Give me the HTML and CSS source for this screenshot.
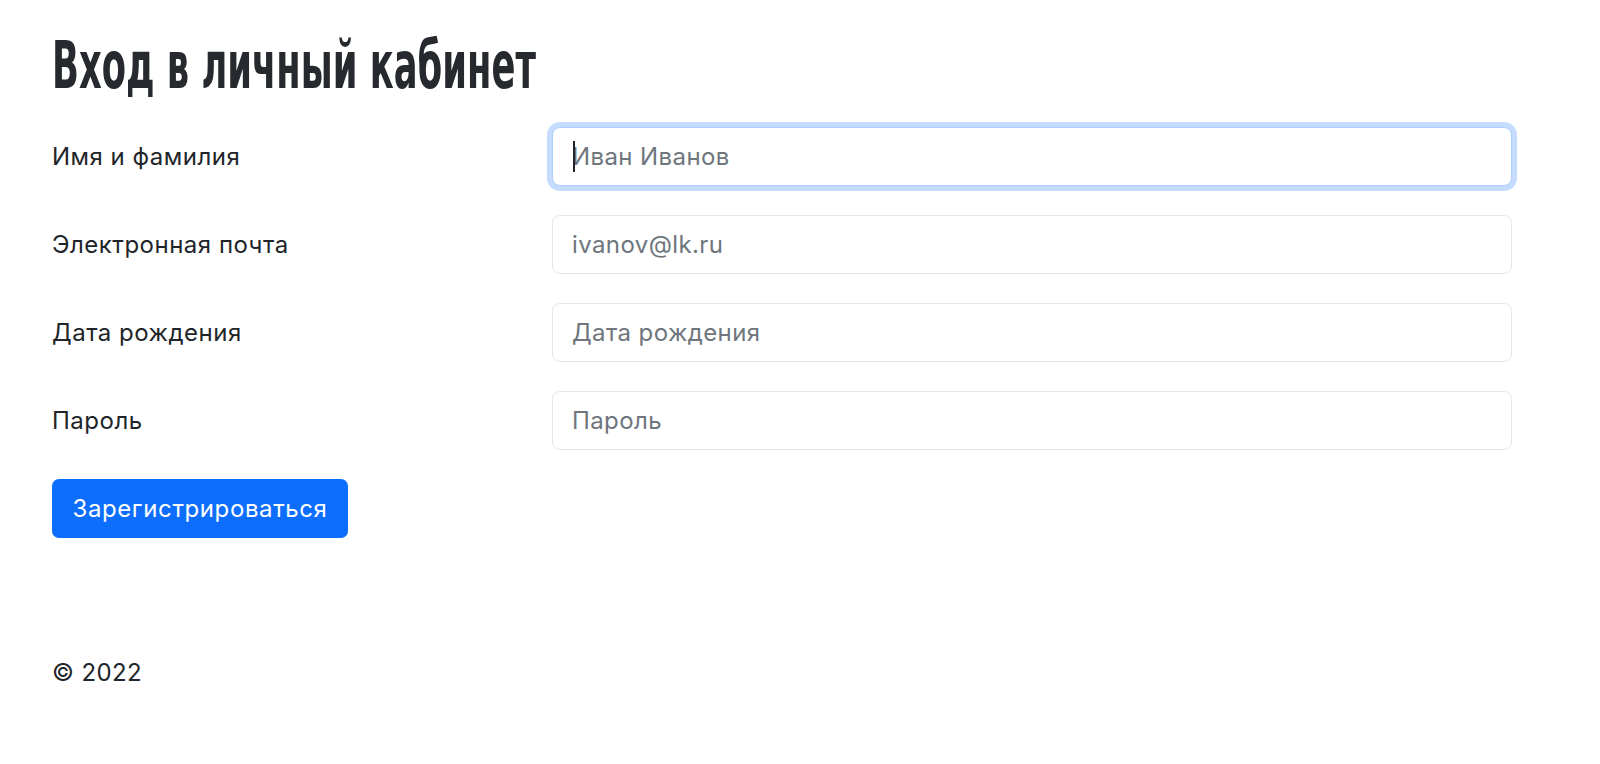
FILE: index.html
```html
<!DOCTYPE html>
<html lang="ru">
<head>
<meta charset="utf-8">
<title>Вход в личный кабинет</title>
<link rel="stylesheet" href="styles.css">
</head>
<body>
<main class="container">
  <h1 class="title"><span class="title-text">Вход в личный кабинет</span></h1>
  <form class="form">
    <div class="row">
      <label class="label" for="name">Имя и фамилия</label>
      <div class="field">
        <input class="input is-focused" id="name" type="text" placeholder="Иван Иванов">
        <span class="caret"></span>
      </div>
    </div>
    <div class="row">
      <label class="label" for="email">Электронная почта</label>
      <div class="field"><input class="input" id="email" type="email" placeholder="ivanov@lk.ru"></div>
    </div>
    <div class="row">
      <label class="label" for="date">Дата рождения</label>
      <div class="field"><input class="input" id="date" type="text" placeholder="Дата рождения"></div>
    </div>
    <div class="row">
      <label class="label" for="pass">Пароль</label>
      <div class="field"><input class="input" id="pass" type="password" placeholder="Пароль"></div>
    </div>
    <button class="btn" type="button">Зарегистрироваться</button>
  </form>
  <footer class="footer">© 2022</footer>
</main>
</body>
</html>
```

FILE: styles.css
```css
html, body {
  margin: 0;
  padding: 0;
  background: #ffffff;
}
body {
  font-family: Inter, "Liberation Sans", Arial, sans-serif;
  color: #212529;
  font-size: 24px;
}
.container {
  padding: 28px 0 0 52px;
  width: 1460px;
}
.title {
  font-family: "DejaVu Sans Condensed", "DejaVu Sans", sans-serif;
  font-weight: 700;
  font-size: 66px;
  line-height: 76px;
  margin: 0 0 23px 0;
  color: #262a2e;
  white-space: nowrap;
}
.title-text {
  display: inline-block;
  transform: scaleX(0.595);
  transform-origin: left center;
}
.form {
  display: flex;
  flex-direction: column;
  gap: 29px;
}
.row {
  display: grid;
  grid-template-columns: 500px 960px;
  align-items: center;
}
.label {
  font-size: 24px;
  letter-spacing: 0.5px;
}
.field {
  position: relative;
}
.input {
  display: block;
  box-sizing: border-box;
  width: 100%;
  height: 59px;
  padding: 0 19px;
  font-family: Inter, "Liberation Sans", Arial, sans-serif;
  font-size: 24px;
  letter-spacing: 0.4px;
  color: #212529;
  background: #fff;
  border: 1.5px solid #e3e6ea;
  border-radius: 8px;
  outline: none;
}
.input::placeholder {
  color: #6e757c;
}
.input.is-focused {
  border-color: #b0cdfb;
  box-shadow: 0 0 0 5px rgba(13, 110, 253, 0.24);
}
.caret {
  position: absolute;
  left: 21px;
  top: 14px;
  width: 2px;
  height: 31px;
  background: #212529;
}
.btn {
  align-self: flex-start;
  width: 296px;
  height: 59px;
  background: #0d6efd;
  color: #ffffff;
  border: none;
  border-radius: 7px;
  font-family: Inter, "Liberation Sans", Arial, sans-serif;
  font-size: 24px;
  letter-spacing: 0.6px;
  padding: 0;
}
.footer {
  margin-top: 120px;
  font-size: 24px;
  letter-spacing: 0.4px;
}
```
